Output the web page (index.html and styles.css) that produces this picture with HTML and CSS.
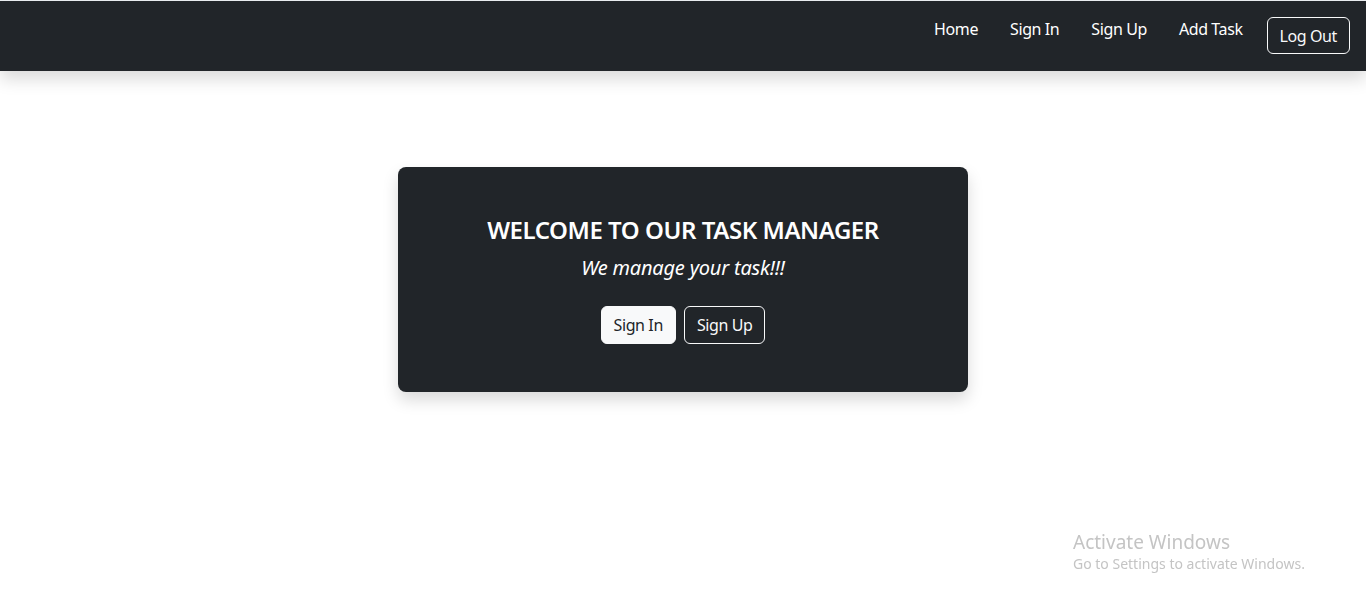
FILE: index.html
```html
<!DOCTYPE html>
<html lang="en">
<head>
<meta charset="utf-8">
<title>Task Manager</title>
<link rel="stylesheet" href="styles.css">
</head>
<body>
<header class="navbar">
  <nav class="nav">
    <a class="nav-link" href="#">Home</a>
    <a class="nav-link" href="#">Sign In</a>
    <a class="nav-link" href="#">Sign Up</a>
    <a class="nav-link" href="#">Add Task</a>
    <button class="btn btn-outline nav-btn">Log Out</button>
  </nav>
</header>
<main class="main">
  <section class="card">
    <h1 class="title">WELCOME TO OUR TASK MANAGER</h1>
    <p class="subtitle">We manage your task!!!</p>
    <div class="actions">
      <button class="btn btn-light">Sign In</button>
      <button class="btn btn-outline">Sign Up</button>
    </div>
  </section>
</main>
<div class="watermark">
  <div class="wm-title">Activate Windows</div>
  <div class="wm-sub">Go to Settings to activate Windows.</div>
</div>
</body>
</html>
```
FILE: styles.css
```css
* { box-sizing: border-box; }
html, body { margin: 0; padding: 0; }
body {
  font-family: "Noto Sans", "Open Sans", sans-serif;
  background: #fff;
  color: #212529;
  height: 603px;
  overflow: hidden;
  border-top: 1px solid #e9ecef;
}
.navbar {
  background: #212529;
  height: 70px;
  display: flex;
  justify-content: flex-end;
  box-shadow: 0 8px 16px rgba(0,0,0,0.15);
  padding: 0 16px 0 0;
}
.nav {
  display: flex;
  align-items: flex-start;
  padding-top: 16px;
}
.nav-link {
  color: #fff;
  text-decoration: none;
  font-size: 16px;
  line-height: 24px;
  letter-spacing: -0.4px;
  padding: 0 16px;
}
.btn {
  font-family: inherit;
  font-size: 16px;
  line-height: 24px;
  letter-spacing: -0.4px;
  padding: 6px 12px;
  border-radius: 6px;
  border: 1px solid #f8f9fa;
  cursor: pointer;
}
.btn-outline {
  background: transparent;
  color: #f8f9fa;
}
.btn-light {
  background: #f8f9fa;
  color: #212529;
}
.nav-btn {
  margin-left: 8px;
  height: 37px;
}
.main {
  display: flex;
  justify-content: center;
  padding-top: 96px;
}
.card {
  width: 570px;
  height: 225px;
  background: #212529;
  border-radius: 8px;
  box-shadow: 0 8px 16px rgba(0,0,0,0.15);
  color: #fff;
  text-align: center;
  padding-top: 47px;
}
.title {
  margin: 0;
  font-size: 24px;
  font-weight: 600;
  line-height: 32px;
  letter-spacing: -0.45px;
}
.subtitle {
  margin: 7px 0 0;
  font-size: 20px;
  font-style: italic;
  line-height: 30px;
  letter-spacing: -0.2px;
}
.actions {
  display: flex;
  justify-content: center;
  gap: 8px;
  margin-top: 23px;
}
.watermark {
  position: fixed;
  left: 1073px;
  top: 530px;
  color: #c4c4c4;
  font-family: "Noto Sans", sans-serif;
}
.wm-title { font-size: 19px; line-height: 24px; }
.wm-sub { font-size: 14px; line-height: 20px; }
```
